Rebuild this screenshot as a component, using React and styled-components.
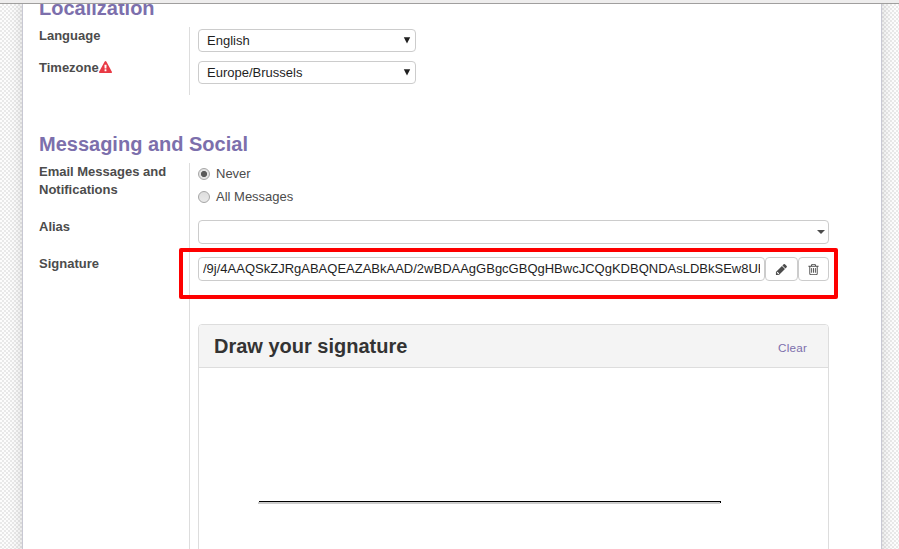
import React from "react";
import styled, { createGlobalStyle } from "styled-components";

const GlobalStyle = createGlobalStyle`
  * { box-sizing: border-box; }
  body {
    margin: 0;
    overflow: hidden;
    font-family: "Liberation Sans", Arial, sans-serif;
    font-size: 13px;
    line-height: 18px;
    color: #4c4c4c;
    background: #fff;
  }
`;

const Page = styled.div`
  height: 549px;
  display: flex;
  flex-direction: column;
  overflow: hidden;
  background: repeating-conic-gradient(#e9e9e9 0 25%, #fdfdfd 0 50%) 0 0 / 4px 4px;
`;

const TopBar = styled.div`
  flex: none;
  height: 4px;
  background: #eeeded;
  border-bottom: 1px solid #a09f9e;
`;

const Viewport = styled.div`
  flex: 1;
  min-height: 0;
  overflow: hidden;
`;

const Sheet = styled.main`
  position: relative;
  height: 640px;
  margin: -10px 17px 0 22px;
  padding: 0 52px 0 16px;
  background: #fff;
  border: 1px solid #c8c8d3;
  border-top: 0;
  box-shadow: 0 0 14px -2px rgba(0, 0, 0, 0.2);
`;

const Group = styled.section`
  height: ${(p) => p.$height}px;
`;

const GroupTitle = styled.h2`
  margin: 0;
  height: 33px;
  font-size: 20px;
  line-height: 28px;
  color: #7c6fac;
`;

const Fields = styled.div`
  display: grid;
  grid-template-columns: 150px 1fr;
  grid-template-rows: ${(p) => p.$rows};
`;

const Label = styled.label`
  font-weight: bold;
  display: flex;
  align-items: flex-start;
  max-width: 150px;
`;

const Cell = styled.div`
  border-left: 1px solid #ddd;
  padding: ${(p) => p.$top || 0}px 0 0 8px;
  min-width: 0;
`;

const SelectBox = styled.div`
  width: 218px;
  height: 23px;
  padding: 0 4px 0 8px;
  display: flex;
  justify-content: space-between;
  border: 1px solid #ccc;
  border-radius: 4px;
  line-height: 22px;
  color: #1f1f1f;

  svg { margin-top: 7px; }
`;

const Option = styled.div`
  display: flex;
  align-items: center;
  gap: 6px;
  height: 18px;
  margin-bottom: 5px;
`;

const Radio = styled.span`
  width: 12px;
  height: 12px;
  border: 1px solid #a6a6a6;
  border-radius: 50%;
  background: ${(p) =>
    p.$checked
      ? "radial-gradient(circle, #5a5a5a 0 2.7px, #e3e3e3 3.5px)"
      : "linear-gradient(#dedede, #e9e9e9)"};
`;

const Combo = styled.div`
  height: 24px;
  padding-right: 3px;
  display: flex;
  align-items: center;
  justify-content: flex-end;
  border: 1px solid #ccc;
  border-radius: 4px;
`;

const FileRow = styled.div`
  display: flex;
  height: 24px;
`;

const FileText = styled.div`
  width: 567px;
  padding: 0 4px;
  border: 1px solid #ccc;
  border-radius: 4px;
  line-height: 22px;
  color: #1f1f1f;

  span { display: block; overflow: hidden; white-space: nowrap; }
`;

const IconButton = styled.button`
  width: ${(p) => p.$width}px;
  padding: 0 1px 0 0;
  display: flex;
  align-items: center;
  justify-content: center;
  border: 1px solid #ccc;
  border-radius: 4px;
  background: #fff;
  color: #4c4c4c;
`;

const Panel = styled.div`
  height: 300px;
  border: 1px solid #ddd;
  border-radius: 4px;
`;

const PanelHeader = styled.header`
  height: 43px;
  padding: 0 21px 0 15px;
  display: flex;
  justify-content: space-between;
  background: #f4f4f4;
  border-bottom: 1px solid #ddd;
  border-radius: 3px 3px 0 0;
`;

const PanelTitle = styled.h3`
  margin: 0;
  font-size: 20px;
  line-height: 42px;
  color: #333;
`;

const ClearLink = styled.a`
  font-size: 11.7px;
  letter-spacing: 0.2px;
  line-height: 46px;
  color: #7c6fac;
`;

const Baseline = styled.div`
  width: 463px;
  height: 3px;
  margin: 133px 0 0 59px;
  background:
    linear-gradient(#000, #000) 1px 0 / 462px 1px no-repeat,
    linear-gradient(#000, #000) 462px 0 / 1px 2px no-repeat,
    linear-gradient(#ccc, #ccc) 0 1px / 462px 2px no-repeat;
`;

const Highlight = styled.div`
  position: absolute;
  left: 156px;
  top: 254px;
  width: 659px;
  height: 51px;
  border: 4px solid #fe0000;
  border-radius: 2px;
  pointer-events: none;
`;

const WarningSvg = styled.svg`
  width: 13px;
  height: 13px;
  margin-top: 2px;
  fill: #e93a45;
`;

const PENCIL =
  "M491 1536l91-91-235-235-91 91v107h128v128h107zM960 416l416 416-832 832h-416v-416zm683 96q0 53-37 90l-166 166-416-416 166-165q36-38 90-38 53 0 91 38l235 234q37 39 37 91z";
const TRASH =
  "M704 736v576q0 14-9 23t-23 9h-64q-14 0-23-9t-9-23v-576q0-14 9-23t23-9h64q14 0 23 9t9 23zm256 0v576q0 14-9 23t-23 9h-64q-14 0-23-9t-9-23v-576q0-14 9-23t23-9h64q14 0 23 9t9 23zm256 0v576q0 14-9 23t-23 9h-64q-14 0-23-9t-9-23v-576q0-14 9-23t23-9h64q14 0 23 9t9 23zm128 724v-948h-896v948q0 22 7 40.5t14.5 27 10.5 8.5h832q3 0 10.5-8.5t14.5-27 7-40.5zm-672-1076h448l-48-117q-7-9-17-11h-317q-10 2-17 11zm928 32v64q0 14-9 23t-23 9h-96v948q0 83-47 143.5t-113 60.5h-832q-66 0-113-58.5t-47-141.5v-952h-96q-14 0-23-9t-9-23v-64q0-14 9-23t23-9h309l70-167q15-37 54-63t79-26h320q40 0 79 26t54 63l70 167h309q14 0 23 9t9 23z";
const WARNING =
  "M1024 1375v-190q0-14-9.5-23.5t-22.5-9.5h-192q-13 0-22.5 9.5t-9.5 23.5v190q0 14 9.5 23.5t22.5 9.5h192q13 0 22.5-9.5t9.5-23.5zm-2-374l18-459q0-12-10-19-13-11-24-11h-220q-11 0-24 11-10 7-10 21l17 457q0 10 10 16.5t24 6.5h185q14 0 23.5-6.5t10.5-16.5zm-14-934l768 1408q35 63-2 126-17 29-46.5 46t-63.5 17h-1536q-34 0-63.5-17t-46.5-46q-37-63-2-126l768-1408q17-31 47-49t65-18 65 18 47 49z";

function Icon({ d }) {
  return (
    <svg width="13" height="13" viewBox="0 0 1792 1792" fill="currentColor">
      <path d={d} />
    </svg>
  );
}

function Select({ value }) {
  return (
    <SelectBox>
      {value}
      <svg width="8" height="7" viewBox="0 0 8 7" fill="#1f1f1f">
        <path d="M0.8 0.3H7.2L4 6.6Z" />
      </svg>
    </SelectBox>
  );
}

export default function App() {
  return (
    <>
      <GlobalStyle />
      <Page>
        <TopBar />
        <Viewport>
          <Sheet>
            <Group $height={136}>
              <GroupTitle>Localization</GroupTitle>
              <Fields $rows="32px 36px">
                <Label>Language</Label>
                <Cell $top={2}><Select value="English" /></Cell>
                <Label>
                  Timezone
                  <WarningSvg viewBox="0 0 1792 1792"><path d={WARNING} /></WarningSvg>
                </Label>
                <Cell $top={2}><Select value="Europe/Brussels" /></Cell>
              </Fields>
            </Group>
            <Group $height={480}>
              <GroupTitle>Messaging and Social</GroupTitle>
              <Fields $rows="55px 37px 69px 310px">
                <Label>Email Messages and Notifications</Label>
                <Cell $top={2}>
                  <Option><Radio $checked />Never</Option>
                  <Option><Radio />All Messages</Option>
                </Cell>
                <Label>Alias</Label>
                <Cell $top={2}>
                  <Combo>
                    <svg width="8" height="4" viewBox="0 0 8 4" fill="#4c4c4c"><path d="M0 0H8L4 4Z" /></svg>
                  </Combo>
                </Cell>
                <Label>Signature</Label>
                <Cell $top={2}>
                  <FileRow>
                    <FileText>
                      <span>/9j/4AAQSkZJRgABAQEAZABkAAD/2wBDAAgGBgcGBQgHBwcJCQgKDBQNDAsLDBkSEw8UHRof</span>
                    </FileText>
                    <IconButton $width={33} aria-label="Edit"><Icon d={PENCIL} /></IconButton>
                    <IconButton $width={31} aria-label="Delete"><Icon d={TRASH} /></IconButton>
                  </FileRow>
                </Cell>
                <span />
                <Cell>
                  <Panel>
                    <PanelHeader>
                      <PanelTitle>Draw your signature</PanelTitle>
                      <ClearLink>Clear</ClearLink>
                    </PanelHeader>
                    <Baseline />
                  </Panel>
                </Cell>
              </Fields>
            </Group>
            <Highlight />
          </Sheet>
        </Viewport>
      </Page>
    </>
  );
}
